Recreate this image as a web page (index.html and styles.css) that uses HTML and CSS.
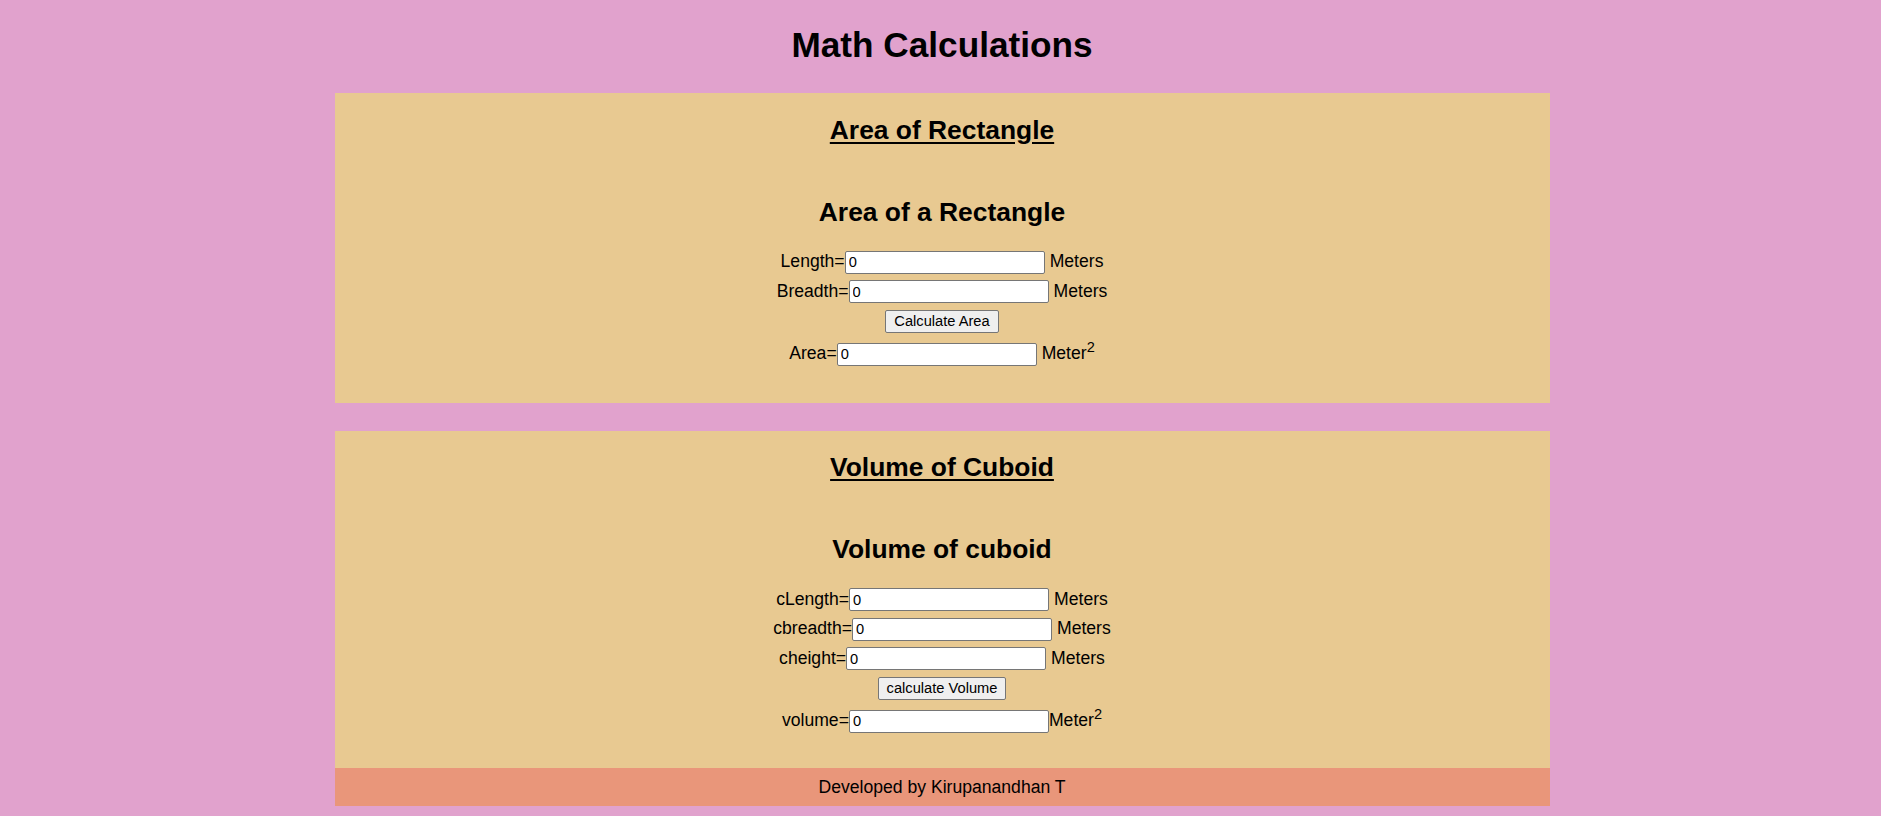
FILE: index.html
```html
<!DOCTYPE html>
<html lang="en">
<head>
<meta charset="utf-8">
<title>Math Calculations</title>
<link rel="stylesheet" href="styles.css">
</head>
<body>
<h1 class="page-title">Math Calculations</h1>

<section class="card">
  <h2 class="card-title">Area of Rectangle</h2>
  <h2 class="calc-title">Area of a Rectangle</h2>
  <div class="row"><span>Length=</span><input class="field" type="text" value="0"><span class="unit">Meters</span></div>
  <div class="row"><span>Breadth=</span><input class="field" type="text" value="0"><span class="unit">Meters</span></div>
  <div class="row"><button class="btn" type="button">Calculate Area</button></div>
  <div class="row result"><span>Area=</span><input class="field" type="text" value="0"><span class="unit">Meter<sup>2</sup></span></div>
</section>

<section class="card card-last">
  <h2 class="card-title">Volume of Cuboid</h2>
  <h2 class="calc-title">Volume of cuboid</h2>
  <div class="row"><span>cLength=</span><input class="field" type="text" value="0"><span class="unit">Meters</span></div>
  <div class="row"><span>cbreadth=</span><input class="field" type="text" value="0"><span class="unit">Meters</span></div>
  <div class="row"><span>cheight=</span><input class="field" type="text" value="0"><span class="unit">Meters</span></div>
  <div class="row"><button class="btn" type="button">calculate Volume</button></div>
  <div class="row result"><span>volume=</span><input class="field" type="text" value="0"><span class="unit tight">Meter<sup>2</sup></span></div>
</section>

<footer class="footer">Developed by Kirupanandhan T</footer>
</body>
</html>
```

FILE: styles.css
```css
html, body {
  margin: 0;
  padding: 0;
}

body {
  padding-left: 3px;
  background: #e1a2cd;
  font-family: "Liberation Sans", Arial, sans-serif;
  font-size: 17.6px;
  color: #000;
}

.page-title {
  margin: 24.5px 0 28.5px;
  font-size: 35.2px;
  line-height: 40px;
  font-weight: bold;
  text-align: center;
}

.card {
  display: flow-root;
  width: 1215px;
  margin: 0 auto 27.5px;
  padding: 21.5px 0 37.5px;
  background: #e8c991;
  text-align: center;
}

.card-last {
  margin-bottom: 0;
  padding-bottom: 35px;
}

.card-title {
  margin: 0;
  font-size: 26.4px;
  line-height: 30px;
  text-decoration: underline;
  text-underline-offset: 3px;
}

.calc-title {
  margin: 52px 0 24px;
  font-size: 26.4px;
  line-height: 30px;
}

.row {
  display: flex;
  justify-content: center;
  align-items: baseline;
  line-height: 20px;
  margin-top: 6.5px;
}

.calc-title + .row {
  margin-top: 0;
}

.row.result {
  margin-top: 10px;
}

.field {
  box-sizing: border-box;
  width: 200px;
  height: 23px;
  margin: 0;
  padding: 1px 3px;
  border: 1px solid #767676;
  border-radius: 2px;
  background: #fff;
  font-family: "Liberation Sans", Arial, sans-serif;
  font-size: 14.67px;
  color: #000;
}

.unit {
  margin-left: 5px;
}

.unit.tight {
  margin-left: 0;
}

.unit sup {
  font-size: 14.6px;
  line-height: 0;
}

.btn {
  box-sizing: border-box;
  height: 23px;
  margin: 0;
  padding: 1px 8px;
  border: 1px solid #767676;
  border-radius: 2px;
  background: #efefef;
  font-family: "Liberation Sans", Arial, sans-serif;
  font-size: 14.67px;
  color: #000;
}

.footer {
  width: 1215px;
  margin: 0 auto;
  padding: 9px 0;
  line-height: 20.5px;
  background: #e9967a;
  text-align: center;
}
```
